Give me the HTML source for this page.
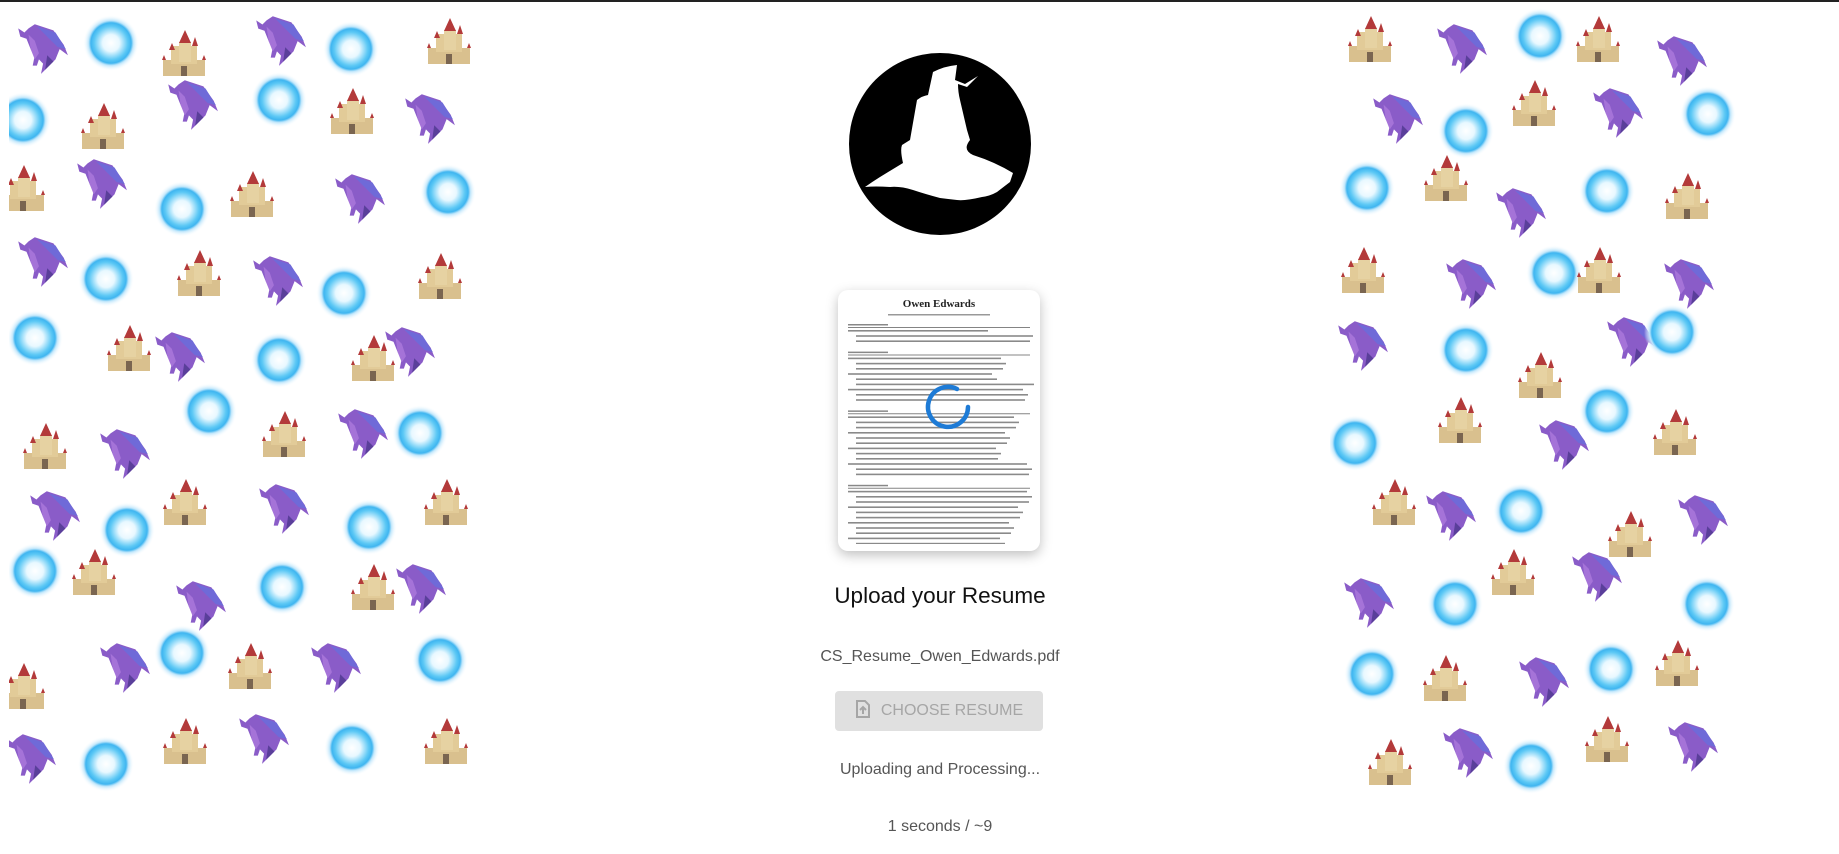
<!DOCTYPE html>
<html><head><meta charset="utf-8"><style>
html,body{margin:0;padding:0;width:1839px;height:854px;overflow:hidden;background:#fff;font-family:"Liberation Sans",Arial,sans-serif}
#top{position:absolute;left:0;top:0;width:1839px;height:2px;background:#222}
.side{position:absolute;top:2px;height:852px;overflow:hidden}
.it{position:absolute}
.c{position:absolute;left:0;width:1880px;text-align:center}
</style></head><body>
<div id="top"></div>
<svg width="0" height="0" style="position:absolute">
<defs>
<radialGradient id="og"><stop offset="0" stop-color="#fff"/><stop offset="0.3" stop-color="#e8f8ff"/><stop offset="0.6" stop-color="#5cc8f5"/><stop offset="0.72" stop-color="#3fb5f0"/><stop offset="0.8" stop-color="#bfe6fb"/><stop offset="1" stop-color="#fff" stop-opacity="0"/></radialGradient>
<symbol id="orb" viewBox="0 0 56 56"><circle cx="28" cy="28" r="28" fill="url(#og)"/></symbol>
<symbol id="dragon" viewBox="0 0 56 56">
<path d="M22 6 L40 12 L50 26 L54 36 L46 30 L42 40 L34 48 L28 54 L30 44 L26 40 L24 46 L20 46 L22 36 L18 30 L14 20 L8 18 L6 10 L12 14 L16 10 Z" fill="#8a5cc8"/>
<path d="M24 8 L42 14 L52 30 L44 28 L36 20 Z" fill="#6f6ad8"/>
<path d="M16 16 L22 22 L26 34 L22 40 L18 30 Z" fill="#a573d8"/>
<path d="M34 36 L40 42 L32 50 Z" fill="#5a3f9a"/>
</symbol>
<symbol id="castle" viewBox="0 0 50 50">
<rect x="4" y="32" width="42" height="16" fill="#d9c08e"/>
<rect x="12" y="18" width="26" height="18" fill="#e2cb98"/>
<rect x="20" y="14" width="12" height="20" fill="#e6d2a2"/>
<polygon points="20,15 26,2 32,15" fill="#b33a3a"/>
<polygon points="33,18 36,9 39,18" fill="#b33a3a"/>
<polygon points="10,22 13,15 16,22" fill="#b33a3a"/>
<polygon points="3,32 5,27 7,32" fill="#b33a3a"/>
<polygon points="43,32 45,27 47,32" fill="#b33a3a"/>
<rect x="22" y="38" width="6" height="10" fill="#7a6550"/>
</symbol>
</defs></svg>
<div class="side" id="L" style="left:9px;width:466px"></div>
<div class="side" id="R" style="left:1330px;width:420px"></div>

<svg style="position:absolute;left:0;top:0" width="1839" height="260">
<circle cx="940" cy="144" r="91" fill="#000"/>
<path d="M933 72 Q945 66 957 65 L955 80 L965 84 L978 76 L967 87 L958 84 Q958 92 960 100 L967 130 L970 140 Q962 150 973 155 Q995 162 1013 173 L1010 182 L997 192 Q990 196 982 197 Q965 201 957 200 Q948 199 940 198 Q925 194 913 190 Q900 186 890 187 Q875 186 865 187 Q872 182 880 177 L903 163 Q900 150 902 145 L910 140 L917 100 Q922 96 928 95 Z" fill="#fff"/>
</svg>

<div style="position:absolute;left:838px;top:290px;width:202px;height:261px;background:#fff;border-radius:10px;box-shadow:0 4px 12px rgba(0,0,0,.25);overflow:hidden">
<div style="text-align:center;font-family:'Liberation Serif',serif;font-weight:bold;font-size:11px;margin-top:8px;color:#222">Owen Edwards</div>
<svg width="202" height="230" style="position:absolute;left:0;top:24px" id="rs"></svg>
<svg width="202" height="261" style="position:absolute;left:0;top:0"><path d="M 130 117 A 20 20 0 1 1 119 99" stroke="#1e7bd6" stroke-width="4.5" fill="none" stroke-linecap="round"/></svg>
</div>

<div class="c" style="top:583px;font-size:22.5px;color:#111">Upload your Resume</div>
<div class="c" style="top:648px;font-size:16px;color:#555">CS_Resume_Owen_Edwards.pdf</div>
<div style="position:absolute;left:835px;top:691px;width:208px;height:40px;background:#e0e0e0;border-radius:4px;color:#a6a6a6;font-size:16px;line-height:40px;text-align:center">
<svg width="16" height="18" viewBox="0 0 16 18" style="vertical-align:-3px;margin-right:10px"><path d="M2 1 H10 L14 5 V17 H2 Z" fill="none" stroke="#a6a6a6" stroke-width="2"/><path d="M8 14 V8 M5 10 L8 7 L11 10" stroke="#a6a6a6" stroke-width="2" fill="none"/></svg>CHOOSE RESUME</div>
<div class="c" style="top:761px;font-size:16px;color:#555">Uploading and Processing...</div>
<div class="c" style="top:818px;font-size:16px;color:#555">1 seconds / ~9</div>

<script>
var k=1.173;
function put(id,off,arr){var el=document.getElementById(id),h='';arr.forEach(function(a){var t=a[0],x=a[1]*k-off,y=a[2]*k-2,s=t=='o'?56:(t=='d'?58:50),n=t=='o'?'orb':(t=='d'?'dragon':'castle');h+='<svg class="it" style="left:'+(x-s/2)+'px;top:'+(y-s/2)+'px" width="'+s+'" height="'+s+'"><use href="#'+n+'"/></svg>';});el.innerHTML=h;}
put('L',9,[['d',35,40],['o',95,37],['c',157,45],['d',238,33],['o',299,42],['c',383,35],
['o',20,102],['c',88,107],['d',163,88],['o',238,85],['c',300,95],['d',365,100],
['c',20,160],['d',85,155],['o',155,178],['c',215,165],['d',305,168],['o',382,164],
['d',35,222],['o',90,238],['c',170,233],['d',235,238],['o',293,250],['c',375,235],
['o',30,288],['c',110,297],['d',152,303],['o',238,307],['c',318,305],['d',348,298],
['o',178,350],['d',308,368],['o',358,369],['c',38,380],['d',105,385],['c',242,370],
['d',45,438],['o',108,452],['c',158,428],['d',240,432],['o',315,449],['c',380,428],
['o',30,487],['c',80,488],['d',170,515],['o',240,500],['c',318,500],['d',357,500],
['c',20,585],['d',105,568],['o',155,557],['c',213,568],['d',285,568],['o',375,563],
['d',25,645],['o',90,651],['c',158,632],['d',223,628],['o',300,638],['c',380,632]]);
put('R',1330,[['c',1168,33],['d',1245,40],['o',1313,31],['c',1362,33],['d',1432,50],
['d',1190,100],['o',1250,112],['c',1308,88],['d',1378,95],['o',1456,97],
['o',1165,160],['c',1233,152],['d',1295,180],['o',1370,163],['c',1438,167],
['c',1162,230],['d',1252,240],['o',1325,233],['c',1363,230],['d',1438,240],
['d',1160,293],['o',1250,298],['c',1313,320],['d',1390,290],['o',1425,283],
['c',1245,358],['o',1370,350],['d',1332,378],['o',1155,378],['c',1428,368],
['c',1188,428],['d',1235,438],['o',1297,436],['c',1390,455],['d',1450,442],
['d',1165,512],['o',1240,515],['c',1290,488],['d',1360,490],['o',1455,515],
['o',1170,575],['c',1232,578],['d',1315,580],['o',1373,570],['c',1430,565],
['c',1185,650],['d',1250,640],['o',1305,653],['c',1370,630],['d',1442,635]]);
var rs=document.getElementById('rs'),h='',y=4,secs=[3,9,12,11,6,5];
h+='<rect x="50" y="0" width="102" height="1.5" fill="#999"/>';
secs.forEach(function(n,i){y+=6;h+='<rect x="10" y="'+y+'" width="40" height="1.5" fill="#888"/><rect x="10" y="'+(y+3)+'" width="182" height="0.8" fill="#666"/>';y+=6;
for(var j=0;j<n;j++){var w=140+((j*37+i*13)%40);h+='<rect x="'+(j%3==0?10:18)+'" y="'+y+'" width="'+w+'" height="1.6" fill="#8a8a8a"/>';y+=5.2;}});
rs.innerHTML=h;
</script>
</body></html>
